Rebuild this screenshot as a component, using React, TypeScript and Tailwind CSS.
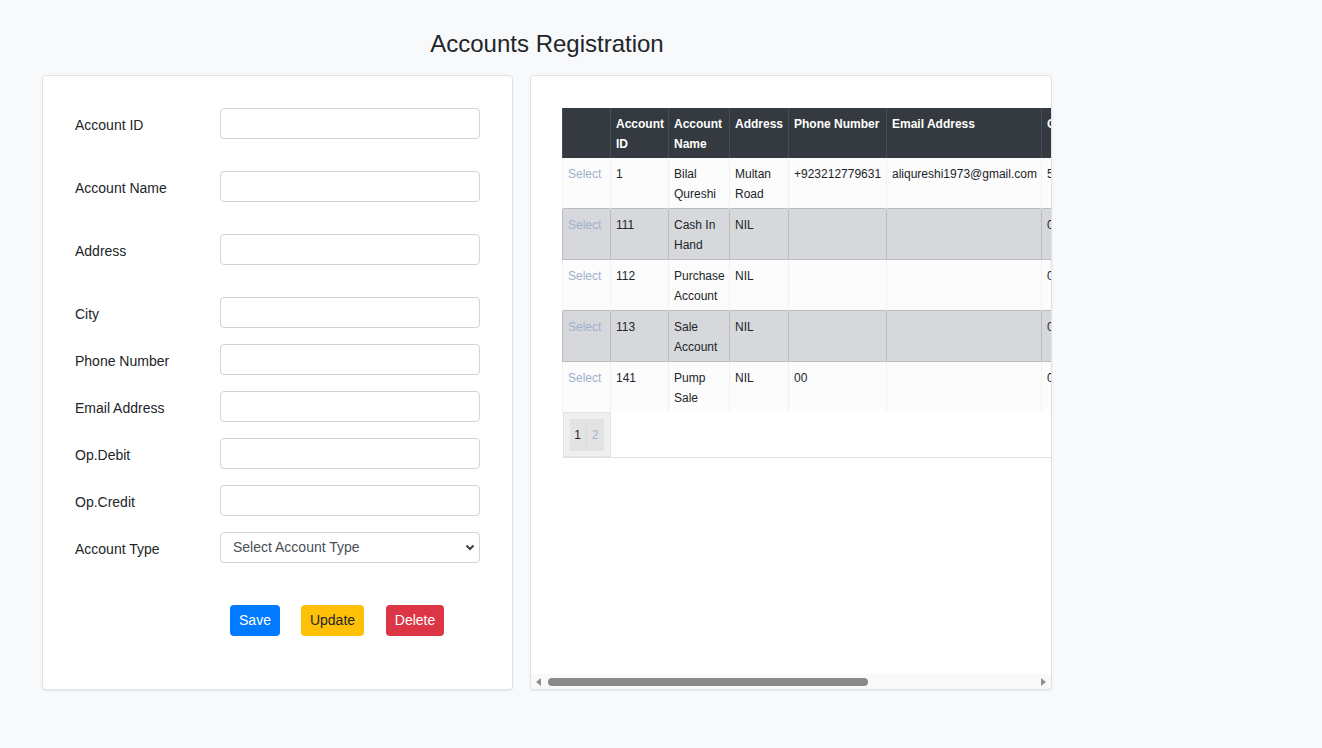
import React from 'react';

const fields: { label: string; gap: string }[] = [
    { label: 'Account ID', gap: 'mb-[32px]' },
    { label: 'Account Name', gap: 'mb-[32px]' },
    { label: 'Address', gap: 'mb-[32px]' },
    { label: 'City', gap: 'mb-[16px]' },
    { label: 'Phone Number', gap: 'mb-[16px]' },
    { label: 'Email Address', gap: 'mb-[16px]' },
    { label: 'Op.Debit', gap: 'mb-[16px]' },
    { label: 'Op.Credit', gap: 'mb-[16px]' },
];

const rows = [
    { id: '1', name: ['Bilal', 'Qureshi'], address: ['Multan', 'Road'], phone: '+923212779631', email: 'aliqureshi1973@gmail.com', debit: '500' },
    { id: '111', name: ['Cash In', 'Hand'], address: ['NIL'], phone: '', email: '', debit: '0' },
    { id: '112', name: ['Purchase', 'Account'], address: ['NIL'], phone: '', email: '', debit: '0' },
    { id: '113', name: ['Sale', 'Account'], address: ['NIL'], phone: '', email: '', debit: '0' },
    { id: '141', name: ['Pump', 'Sale'], address: ['NIL'], phone: '00', email: '', debit: '0' },
];

const Lines: React.FC<{ lines: string[] }> = ({ lines }) => (
    <>
        {lines.map((l, i) => (
            <div key={i}>{l}</div>
        ))}
    </>
);

const AccountForm: React.FC = () => (
    <div className="w-[471px] h-[615px] bg-white border border-[#dfe2e5] rounded-[4px] shadow-[0_1px_2px_rgba(0,0,0,0.08)] pt-[32px] pl-[32px]">
        {fields.map((f) => (
            <div key={f.label} className={`flex items-center ${f.gap}`}>
                <label className="w-[145px] pt-[3px] text-[14px] leading-[20px] text-[#212529]">{f.label}</label>
                <input className="w-[260px] h-[31px] border border-[#ced4da] rounded-[4px] bg-white px-3 text-[14px] outline-none" />
            </div>
        ))}
        <div className="flex items-center">
            <label className="w-[145px] pt-[3px] text-[14px] leading-[20px] text-[#212529]">Account Type</label>
            <div className="relative">
                <select className="appearance-none w-[260px] h-[31px] border border-[#ced4da] rounded-[4px] bg-white pl-[12px] text-[14px] text-[#495057] outline-none">
                    <option>Select Account Type</option>
                </select>
                <svg className="absolute right-[5px] top-[12px] pointer-events-none" width="10" height="7" viewBox="0 0 10 7">
                    <path d="M1.5 1.5 L5 5 L8.5 1.5" fill="none" stroke="#3c4043" strokeWidth="2" />
                </svg>
            </div>
        </div>
        <div className="flex pl-[155px] mt-[42px]">
            <button className="w-[50px] h-[31px] rounded-[4px] bg-[#007bff] text-white text-[14px]">Save</button>
            <button className="w-[63px] h-[31px] ml-[21px] rounded-[4px] bg-[#ffc107] text-[#212529] text-[14px]">Update</button>
            <button className="w-[58px] h-[31px] ml-[22px] rounded-[4px] bg-[#dc3545] text-white text-[14px]">Delete</button>
        </div>
    </div>
);

const AccountTable: React.FC = () => {
    const headers = [['Account', 'ID'], ['Account', 'Name'], ['Address'], ['Phone Number'], ['Email Address'], ['Op.Debit']];
    return (
        <div className="w-[522px] h-[615px] bg-white border border-[#dfe2e5] rounded-[4px] shadow-[0_1px_2px_rgba(0,0,0,0.08)] flex flex-col overflow-hidden">
            <div className="flex-1 overflow-hidden pt-[32px] pl-[31px]">
                <table className="table-fixed border-collapse w-[560px] text-[12px] leading-[20px] text-[#212529]">
                    <colgroup>
                        <col className="w-[48px]" />
                        <col className="w-[58px]" />
                        <col className="w-[61px]" />
                        <col className="w-[59px]" />
                        <col className="w-[98px]" />
                        <col className="w-[155px]" />
                        <col className="w-[81px]" />
                    </colgroup>
                    <thead>
                        <tr className="bg-[#343a40] text-white font-bold text-left align-top">
                            <th className="pt-[6px] pb-[4px] px-[5px] h-[50px] border-x border-[#454d55]"></th>
                            {headers.map((h, i) => (
                                <th key={i} className="pt-[6px] pb-[4px] px-[5px] border-x border-[#454d55] font-bold whitespace-nowrap">
                                    <Lines lines={h} />
                                </th>
                            ))}
                        </tr>
                    </thead>
                    <tbody>
                        {rows.map((r, i) => {
                            const gray = i % 2 === 1;
                            const cell = gray
                                ? 'pt-[6px] pb-[4px] px-[5px] h-[50px] align-top border border-[#b9bcc0]'
                                : 'pt-[6px] pb-[4px] px-[5px] h-[50px] align-top border-x border-[#f1f1f1]';
                            return (
                                <tr key={r.id} className={gray ? 'bg-[#d6d8db]' : 'bg-[#fcfcfc]'}>
                                    <td className={`${cell} text-[#9fb0cb]`}>Select</td>
                                    <td className={cell}>{r.id}</td>
                                    <td className={cell}><Lines lines={r.name} /></td>
                                    <td className={cell}><Lines lines={r.address} /></td>
                                    <td className={`${cell} whitespace-nowrap`}>{r.phone}</td>
                                    <td className={`${cell} whitespace-nowrap`}>{r.email}</td>
                                    <td className={cell}>{r.debit}</td>
                                </tr>
                            );
                        })}
                        <tr className="bg-white">
                            <td colSpan={7} className="p-0 border-b border-[#dee2e6]">
                                <div className="w-[48px] h-[45px] bg-[#efefef] border border-[#e2e2e2] p-[6px] flex">
                                    <span className="w-[17px] h-[32px] bg-[#e3e3e3] border-r border-[#d9dde2] flex items-center justify-center text-[#212529]">1</span>
                                    <span className="w-[17px] h-[32px] bg-[#e3e3e3] flex items-center justify-center text-[#a3b3cc]">2</span>
                                </div>
                            </td>
                        </tr>
                    </tbody>
                </table>
            </div>
            <div className="h-[15px] bg-[#f9f9f9] flex items-center px-[5px] gap-[7px]">
                <svg width="5" height="8" viewBox="0 0 5 8"><path d="M5 0 L0 4 L5 8 Z" fill="#8f8f8f" /></svg>
                <div className="w-[320px] h-[8px] rounded-full bg-[#8a8a8a]" />
                <div className="flex-1" />
                <svg width="5" height="8" viewBox="0 0 5 8"><path d="M0 0 L5 4 L0 8 Z" fill="#8f8f8f" /></svg>
            </div>
        </div>
    );
};

export default function App() {
    return (
        <div className="min-h-screen bg-[#f8f9fa] font-['Liberation_Sans',Arial,sans-serif] pt-[29px]">
            <div className="w-[1010px] ml-[42px]">
                <h3 className="text-center text-[24px] leading-[29px] text-[#212529] mb-[17px]">Accounts Registration</h3>
                <div className="flex gap-[17px]">
                    <AccountForm />
                    <AccountTable />
                </div>
            </div>
        </div>
    );
}
